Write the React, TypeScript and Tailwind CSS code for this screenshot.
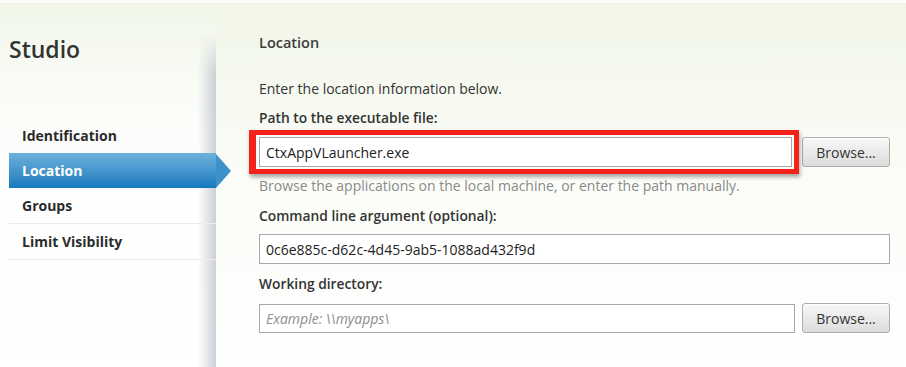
import { useState } from "react";

const font = { fontFamily: '"Open Sans", "Noto Sans", sans-serif' };

const navItems = ["Identification", "Location", "Groups", "Limit Visibility"];

function NavItem({ label, active }: { label: string; active: boolean }) {
  if (active) {
    return (
      <div className="relative ml-[9px] mr-[-15px] flex h-[35px] items-center">
        <div className="flex h-full flex-1 items-center bg-gradient-to-b from-[#6cb2dc] to-[#1479bd] pl-[13px] text-[14px] font-bold text-white">
          {label}
        </div>
        <div className="h-0 w-0 border-y-[17.5px] border-l-[15px] border-y-transparent border-l-[#3d92cb]" />
      </div>
    );
  }
  return (
    <div
      className={`ml-[9px] flex h-[36px] items-center pl-[13px] text-[14px] font-bold text-[#2b2b2b] ${
        label === "Identification" ? "" : "border-b border-[#ececec]"
      }`}
    >
      {label}
    </div>
  );
}

function BrowseButton() {
  return (
    <button
      type="button"
      className="h-[30px] w-[88px] rounded-[3px] border border-[#acacac] bg-gradient-to-b from-[#f8f8f8] to-[#dcdcdc] text-[14px] text-[#333] shadow-[inset_0_1px_0_#fff]"
    >
      Browse...
    </button>
  );
}

export default function App() {
  const [path, setPath] = useState("CtxAppVLauncher.exe");
  const [args, setArgs] = useState("0c6e885c-d62c-4d45-9ab5-1088ad432f9d");
  const [dir, setDir] = useState("");

  return (
    <div
      className="flex h-[367px] w-[906px] overflow-hidden border-t-[3px] border-[#fbfdf8] bg-gradient-to-b from-[#f1f6e8] via-[#fbfdf8] via-50% to-white"
      style={font}
    >
      <aside className="relative flex w-[216px] shrink-0 flex-col bg-gradient-to-b from-transparent via-white/70 via-40% to-white">
        <div className="pointer-events-none absolute right-0 top-[30px] bottom-0 w-[18px] bg-gradient-to-r from-transparent to-[#cbd0d5] [mask-image:linear-gradient(to_bottom,transparent,black_40px)]" />
        <h1 className="ml-[9px] mt-[31px] text-[23px] font-semibold leading-[30px] text-[#333]">
          Studio
        </h1>
        <nav className="relative mt-[53px] flex flex-col">
          {navItems.map((item) => (
            <NavItem key={item} label={item} active={item === "Location"} />
          ))}
        </nav>
      </aside>

      <main className="flex flex-1 flex-col pl-[43px] pr-[16px] pt-[30px] text-[#333]">
        <h2 className="text-[14.5px] font-semibold leading-[20px] text-[#3c3c3c]">Location</h2>
        <p className="mt-[26px] text-[14px] leading-[20px]">Enter the location information below.</p>
        <label className="mt-[9px] text-[13.8px] font-semibold leading-[20px]">
          Path to the executable file:
        </label>

        <div className="mt-[9px] flex items-center gap-[10px]">
          <div className="relative flex-1">
            <input
              value={path}
              onChange={(e) => setPath(e.target.value)}
              className="h-[30px] w-full border border-[#a8a8a8] bg-white px-[6px] text-[14px] text-[#222] outline-none"
            />
            <div className="pointer-events-none absolute inset-y-[-7px] left-[-10px] right-[-7px] border-[5px] border-l-[7px] border-[#f3231a] shadow-[1px_3px_4px_rgba(0,0,0,0.35)]" />
          </div>
          <BrowseButton />
        </div>
        <p className="mt-[9px] text-[14px] leading-[20px] text-[#8a8a8a]">
          Browse the applications on the local machine, or enter the path manually.
        </p>

        <label className="mt-[10px] text-[13.8px] font-semibold leading-[20px]">
          Command line argument (optional):
        </label>
        <input
          value={args}
          onChange={(e) => setArgs(e.target.value)}
          className="mt-[8px] h-[30px] w-full border border-[#a8a8a8] bg-white px-[6px] text-[14px] text-[#222] outline-none"
        />

        <label className="mt-[10px] text-[13.8px] font-semibold leading-[20px]">Working directory:</label>
        <div className="mt-[9px] flex items-center gap-[7px]">
          <input
            value={dir}
            onChange={(e) => setDir(e.target.value)}
            placeholder="Example: \\myapps\"
            className="h-[29px] flex-1 border border-[#a8a8a8] bg-white px-[6px] text-[14px] text-[#222] outline-none placeholder:italic placeholder:text-[#8d8d8d]"
          />
          <BrowseButton />
        </div>
      </main>
    </div>
  );
}
